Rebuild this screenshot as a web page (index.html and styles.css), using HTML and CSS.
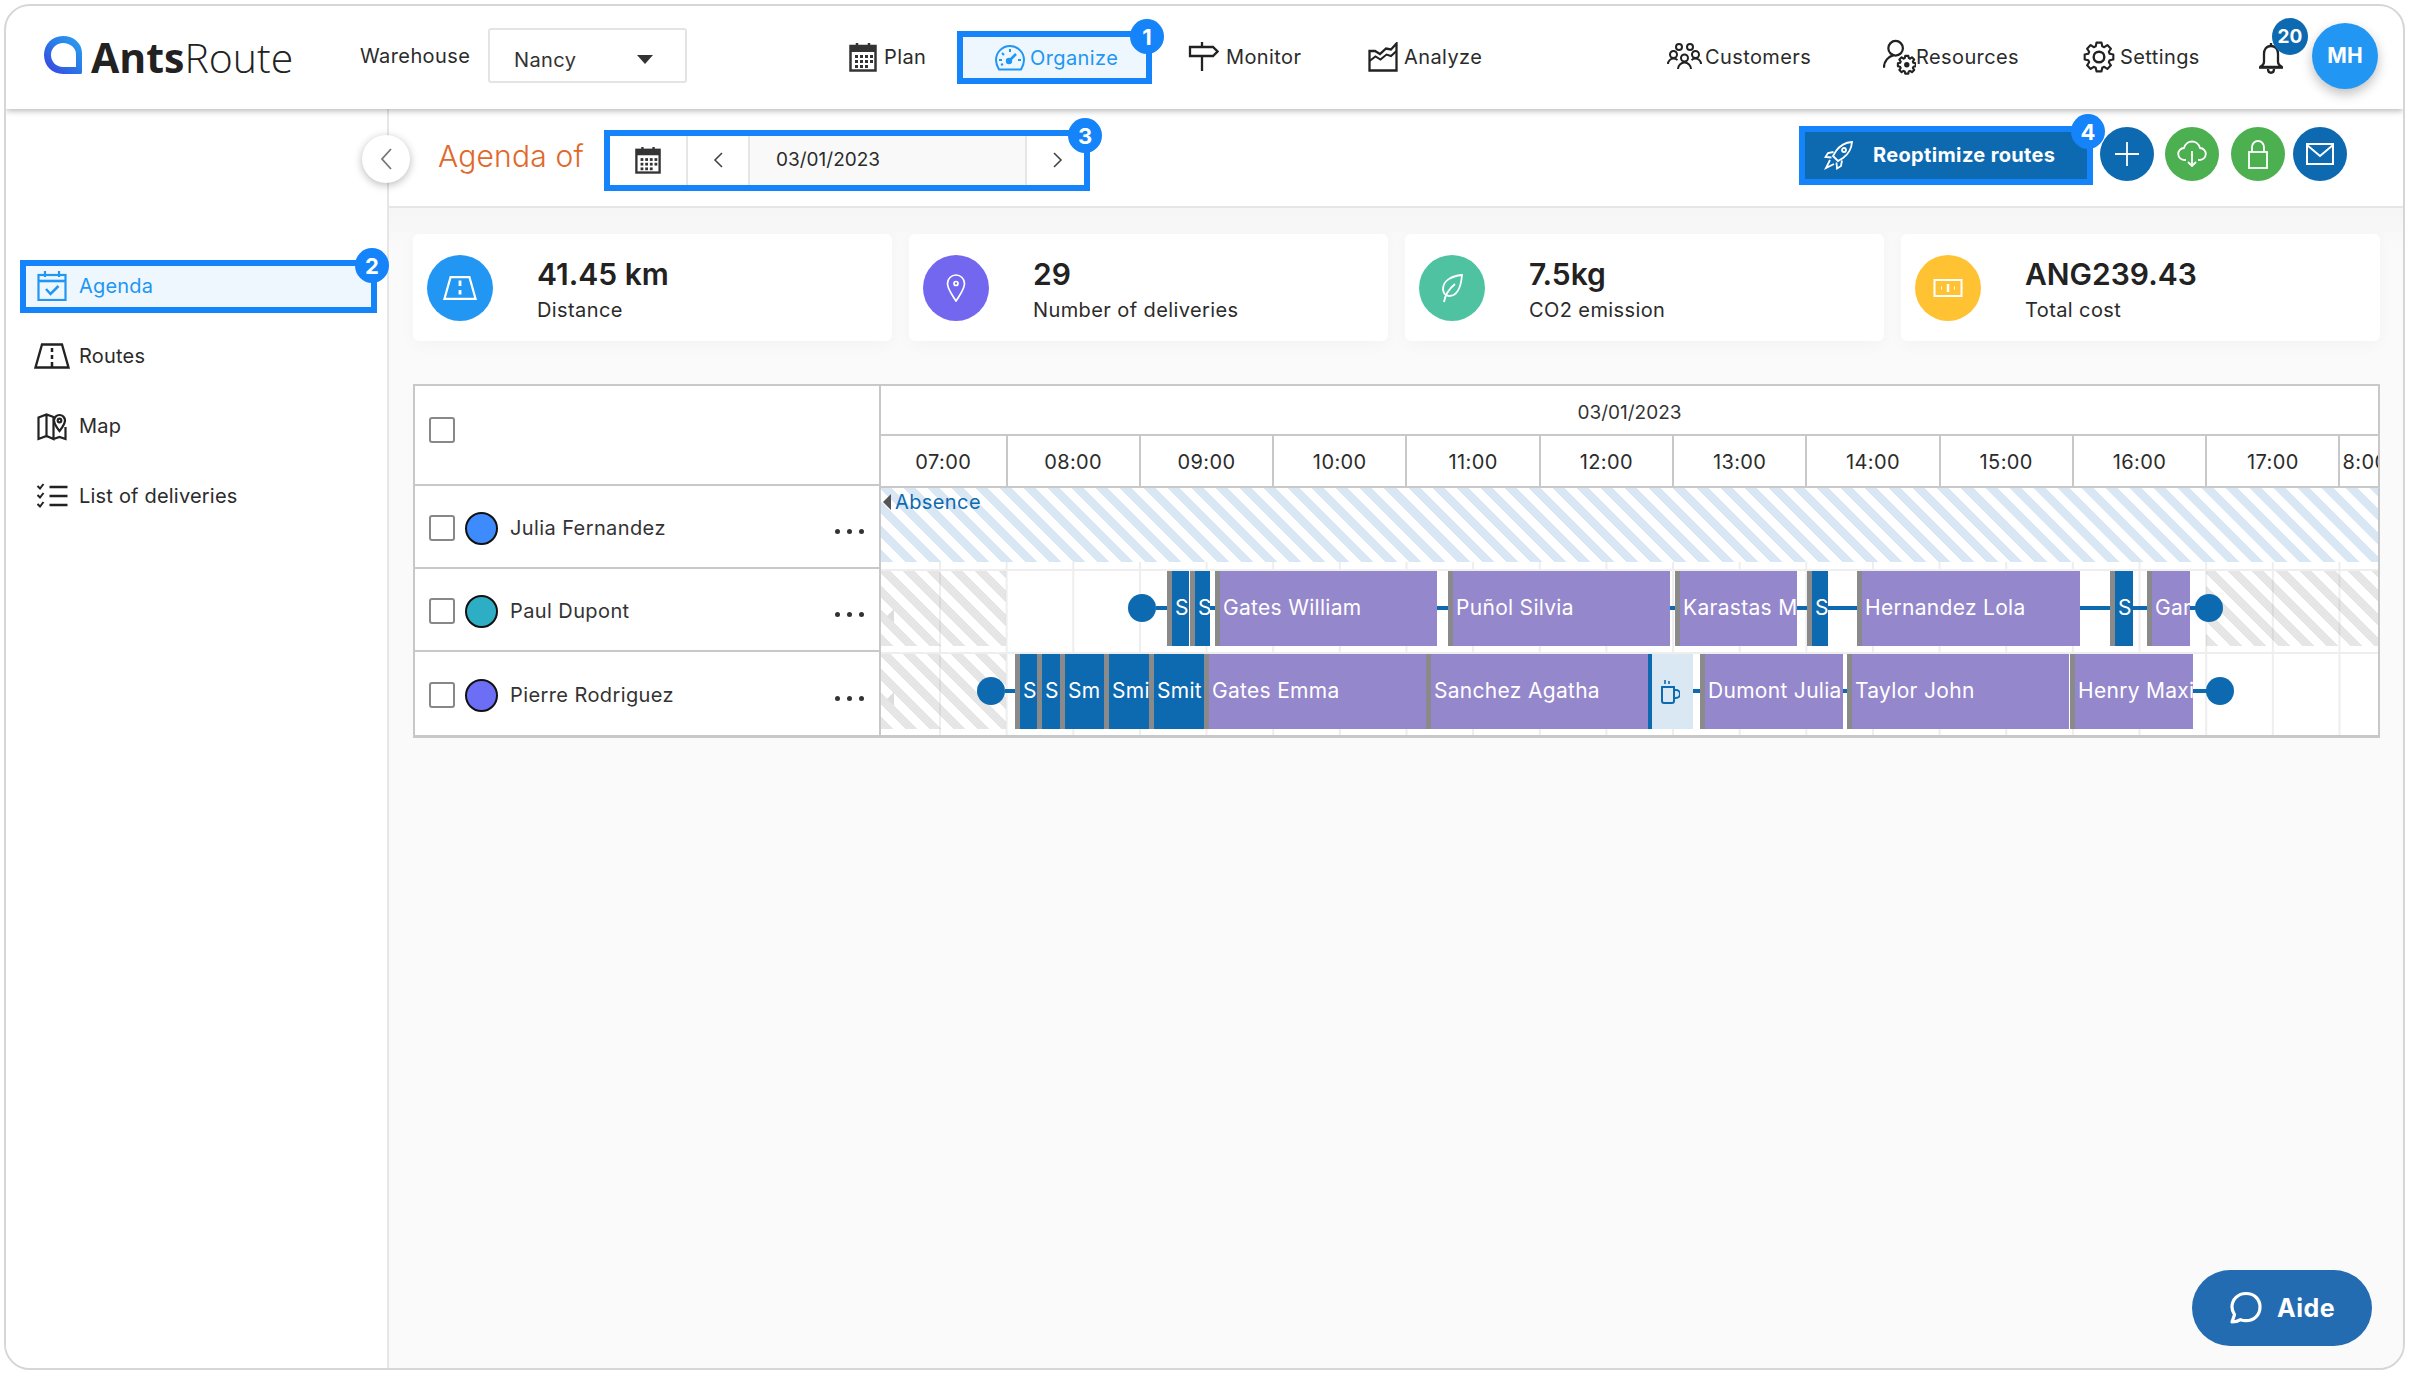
FILE: index.html
```html
<!DOCTYPE html>
<html lang="en">
<head>
    <meta charset="UTF-8">
    <title>AntsRoute - Agenda</title>
    <link rel="stylesheet" href="styles.css">
</head>
<body>
    <div class="frame">
        <header class="topbar">
            <div class="brand">
                <svg class="brand-mark" viewBox="0 0 40 40">
                    <defs>
                        <linearGradient id="mark" x1="0" y1="1" x2="1" y2="0">
                            <stop offset="0" stop-color="#3a3fe0"/>
                            <stop offset="0.55" stop-color="#2a7ce8"/>
                            <stop offset="1" stop-color="#2aa4f0"/>
                        </linearGradient>
                    </defs>
                    <path fill="url(#mark)" fill-rule="evenodd" d="M20 1C9 1 1 9.500 1 20s8 19 19 19h18a2 2 0 0 0 1-2V18C39 8.500 31 1 20 1zM20 8c-6.500 0-12 5-12 12s5.500 12 12 12h13V19c0-6-5.500-11-13-11z"/>
                </svg>
                <span class="brand-name"><b>Ants</b>Route</span>
            </div>
            <label class="warehouse-label">Warehouse</label>
            <div class="select">
                <span>Nancy</span>
                <i class="caret"></i>
            </div>

            <nav class="nav">
                <a class="nav-item nav-plan">
                    <svg class="ico" width="28" height="30" viewBox="0 0 28 30"><rect x="1.500" y="4" width="25" height="24.500" fill="none" stroke="#333" stroke-width="2.500"/><path d="M1 4h26v6H1z" fill="#333"/><path d="M8 1v5M20 1v5" stroke="#333" stroke-width="2.500"/><g fill="#333"><rect x="6" y="13" width="3" height="3"/><rect x="11" y="13" width="3" height="3"/><rect x="16" y="13" width="3" height="3"/><rect x="21" y="13" width="3" height="3"/><rect x="6" y="18" width="3" height="3"/><rect x="11" y="18" width="3" height="3"/><rect x="16" y="18" width="3" height="3"/><rect x="21" y="18" width="3" height="3"/><rect x="6" y="23" width="3" height="3"/><rect x="11" y="23" width="3" height="3"/><rect x="16" y="23" width="3" height="3"/></g></svg>
                    Plan
                </a>
                <a class="nav-item nav-organize">
                    <svg class="ico" width="30" height="26" viewBox="0 0 30 26" fill="none" stroke="#2196f3" stroke-width="2"><path d="M4 24.500C2.200 21.500 1 18.500 1 15 1 7.300 7.300 1 15 1s14 6.300 14 14c0 3.500-1.200 6.500-3 9.500z"/><path d="M14 16l7-7" stroke-width="2.500"/><circle cx="14" cy="16" r="2.200" fill="#2196f3"/><path d="M15 4v3M7 8l2 2M4 15h3M26 15h-3M6 20l2-1" stroke-width="2"/></svg>
                    Organize
                    <span class="step">1</span>
                </a>
                <a class="nav-item nav-monitor">
                    <svg class="ico" width="31" height="29" viewBox="0 0 31 29" fill="none" stroke="#222" stroke-width="2.300"><path d="M2 5h23l4.500 4.500L25 14H2z"/><path d="M14 0v5M14 14v15"/></svg>
                    Monitor
                </a>
                <a class="nav-item nav-analyze">
                    <svg class="ico" width="30" height="30" viewBox="0 0 30 30" fill="none" stroke="#222" stroke-width="2.300"><path d="M1.500 9v19.500h27V1.500l-5.500 6-5-1-6 5.500-5-3z"/><path d="M1.500 19l6-4.500 5 3 6-5 4.500 1.500 5.500-5" stroke-width="2"/></svg>
                    Analyze
                </a>
                <a class="nav-item nav-customers">
                    <svg class="ico" width="35" height="27" viewBox="0 0 35 27" fill="none" stroke="#222" stroke-width="2"><circle cx="12" cy="4" r="3"/><circle cx="23" cy="4" r="3"/><circle cx="6.500" cy="11.500" r="3.500"/><circle cx="28.500" cy="11.500" r="3.500"/><circle cx="17.500" cy="15" r="3.500"/><path d="M1 21c0-3 2.500-5.500 5.500-5.500 1.500 0 3 .6 4 1.600M34 21c0-3-2.500-5.500-5.500-5.500-1.500 0-3 .6-4 1.600M11 26c0-3.500 3-6.500 6.500-6.500S24 22.500 24 26"/></svg>
                    Customers
                </a>
                <a class="nav-item nav-resources">
                    <svg class="ico" width="33" height="36" viewBox="0 0 34 36"><g fill="none" stroke="#222" stroke-width="2.300"><circle cx="13" cy="9" r="7.500"/><path d="M1 29c0-7 4.500-11.500 10-13"/></g><g transform="translate(24.500 26) scale(.62)"><path fill="none" stroke="#222" stroke-width="3.500" stroke-linejoin="round" d="M11-3.360L14.770-2.600 14.770 2.600 11 3.360 10.150 5.400 12.290 8.600 8.600 12.290 5.400 10.150 3.360 11 2.600 14.770-2.600 14.770-3.360 11-5.400 10.150-8.600 12.290-12.290 8.600-10.150 5.400-11 3.360-14.770 2.600-14.770-2.600-11-3.360-10.150-5.400-12.290-8.600-8.600-12.290-5.400-10.150-3.360-11-2.600-14.770 2.600-14.770 3.360-11 5.400-10.150 8.600-12.290 12.290-8.600 10.150-5.400z"/><circle r="4.500" fill="#222"/></g></svg>
                    Resources
                </a>
                <a class="nav-item nav-settings">
                    <svg class="ico" width="32" height="34" viewBox="-16.500 -16.500 33 33"><path fill="none" stroke="#222" stroke-width="2.200" stroke-linejoin="round" d="M11-3.360L14.770-2.600 14.770 2.600 11 3.360 10.150 5.400 12.290 8.600 8.600 12.290 5.400 10.150 3.360 11 2.600 14.770-2.600 14.770-3.360 11-5.400 10.150-8.600 12.290-12.290 8.600-10.150 5.400-11 3.360-14.770 2.600-14.770-2.600-11-3.360-10.150-5.400-12.290-8.600-8.600-12.290-5.400-10.150-3.360-11-2.600-14.770 2.600-14.770 3.360-11 5.400-10.150 8.600-12.290 12.290-8.600 10.150-5.400z"/><circle r="5.500" fill="none" stroke="#222" stroke-width="2.500"/></svg>
                    Settings
                </a>
            </nav>

            <div class="bell">
                <svg width="26" height="32" viewBox="0 0 26 32" fill="none" stroke="#222" stroke-width="2.300"><path d="M13 4c-5 0-7 4-7 8v8c0 2-2 4-4 5h22c-2-1-4-3-4-5v-8c0-4-2-8-7-8z"/><path d="M1 25.500h24" /><path d="M13 1v3"/><path d="M10 27c0 5 6 5 6 0"/></svg>
                <span class="bell-count">20</span>
            </div>
            <div class="avatar">MH</div>
        </header>

        <div class="workspace">
            <aside class="sidebar">
                <button class="collapse">
                    <svg width="12" height="22" viewBox="0 0 12 22" fill="none" stroke="#777" stroke-width="1.800"><path d="M11 1L2 11l9 10"/></svg>
                </button>
                <a class="side-item side-active">
                    <svg class="side-ico" width="30" height="30" viewBox="0 0 30 30" fill="none" stroke="#2196f3" stroke-width="2.200"><rect x="1.500" y="4" width="27" height="25"/><path d="M1.500 10h27" stroke-width="2.600"/><path d="M8 0v6M22 0v6"/><path d="M9 18l4.500 5 8-8" stroke-width="2.500"/></svg>
                    Agenda
                    <span class="step">2</span>
                </a>
                <a class="side-item">
                    <svg class="side-ico" width="36" height="26" viewBox="0 0 36 26" fill="none" stroke="#222" stroke-width="2.300"><path d="M8 1.500h20L34.500 24.500H1.500z"/><path d="M18 5v4M18 12v4M18 19v5" stroke-width="2.500"/></svg>
                    Routes
                </a>
                <a class="side-item">
                    <svg class="side-ico" width="30" height="30" viewBox="0 0 30 30" fill="none" stroke="#222" stroke-width="2.200"><path d="M1.500 6.500l8-3 7 2.500v22l-7-3-8 3zM9.500 3.500v23M16.500 28l6-2 6 2V16"/><path d="M22.500 20c-3-4-5.500-7-5.500-10.500a5.500 5.500 0 0 1 11 0C28 13 25.500 16 22.500 20z" fill="#fff"/><circle cx="22.500" cy="9.500" r="1.800"/></svg>
                    Map
                </a>
                <a class="side-item">
                    <svg class="side-ico" width="31" height="26" viewBox="0 0 31 26" fill="none" stroke="#222" stroke-width="2.500"><path d="M13 4h18M13 13h18M13 22h18"/><path d="M1 3l2.500 2.500L7 1M1 12l2.500 2.500L7 10M1 21l2.500 2.500L7 19" stroke-width="2"/></svg>
                    List of deliveries
                </a>
            </aside>

            <main class="content">
                <div class="toolbar">
                    <h1 class="title">Agenda of</h1>
                    <div class="date-box">
                        <span class="date-cell date-cal">
                            <svg width="26" height="28" viewBox="0 0 28 30"><rect x="1.500" y="4" width="25" height="24.500" fill="none" stroke="#333" stroke-width="2.500"/><path d="M1 4h26v6H1z" fill="#333"/><path d="M8 1v5M20 1v5" stroke="#333" stroke-width="2.500"/><g fill="#333"><rect x="6" y="13" width="3" height="3"/><rect x="11" y="13" width="3" height="3"/><rect x="16" y="13" width="3" height="3"/><rect x="21" y="13" width="3" height="3"/><rect x="6" y="18" width="3" height="3"/><rect x="11" y="18" width="3" height="3"/><rect x="16" y="18" width="3" height="3"/><rect x="21" y="18" width="3" height="3"/><rect x="6" y="23" width="3" height="3"/><rect x="11" y="23" width="3" height="3"/><rect x="16" y="23" width="3" height="3"/></g></svg>
                        </span>
                        <span class="date-cell date-prev">
                            <svg width="10" height="16" viewBox="0 0 10 16" fill="none" stroke="#444" stroke-width="1.600"><path d="M9 1L2 8l7 7"/></svg>
                        </span>
                        <span class="date-cell date-value">03/01/2023</span>
                        <span class="date-cell date-next">
                            <svg width="10" height="16" viewBox="0 0 10 16" fill="none" stroke="#444" stroke-width="1.600"><path d="M1 1l7 7-7 7"/></svg>
                        </span>
                        <span class="step">3</span>
                    </div>

                    <div class="actions">
                        <button class="reoptimize">
                            <svg width="30" height="30" viewBox="0 0 30 30" fill="none" stroke="#fff" stroke-width="1.800"><path d="M28 2c-7 .5-12 3.500-16 9l-3 5 5 5 5-3c5.500-4 8.500-9 9-16z"/><circle cx="20" cy="10" r="2"/><path d="M9.500 12L4 13l-2.500 4 6 .5M18 20.500l-1 5.500-4 2.500-.5-6M6 20l-4 8 8-4"/></svg>
                            Reoptimize routes
                            <span class="step">4</span>
                        </button>
                        <button class="round round-blue">
                            <svg width="26" height="26" viewBox="0 0 26 26" stroke="#fff" stroke-width="1.800"><path d="M13 1v24M1 13h24"/></svg>
                        </button>
                        <button class="round round-green">
                            <svg width="30" height="28" viewBox="0 0 30 28" fill="none" stroke="#fff" stroke-width="1.800"><path d="M9 20H7.500a6 6 0 0 1-.5-12c1-4 4.500-6.500 8-6.500S22 4 23 8a6 6 0 0 1-.5 12H21"/><path d="M15 11v15M11 22l4 4 4-4"/></svg>
                        </button>
                        <button class="round round-green">
                            <svg width="22" height="30" viewBox="0 0 22 30" fill="none" stroke="#fff" stroke-width="1.800"><rect x="2" y="13" width="18" height="16"/><path d="M5 13V8a6 6 0 0 1 12 0v5"/></svg>
                        </button>
                        <button class="round round-blue">
                            <svg width="28" height="22" viewBox="0 0 28 22" fill="none" stroke="#fff" stroke-width="2"><rect x="1" y="1" width="26" height="20"/><path d="M1 2l13 11L27 2"/></svg>
                        </button>
                    </div>
                </div>

                <div class="page">
                    <section class="stats">
                        <div class="stat">
                            <span class="stat-ico stat-blue">
                                <svg width="34" height="28" viewBox="0 0 36 26" fill="none" stroke="#fff" stroke-width="2.300"><path d="M8 1.500h20L34.500 24.500H1.500z"/><path d="M18 5v6M18 15v5" stroke-width="3"/></svg>
                            </span>
                            <div><div class="stat-value">41.45 km</div><div class="stat-label">Distance</div></div>
                        </div>
                        <div class="stat">
                            <span class="stat-ico stat-violet">
                                <svg width="20" height="28" viewBox="0 0 20 28" fill="none" stroke="#fff" stroke-width="1.700"><path d="M10 27C5 19 1.500 15 1.500 9.500a8.500 8.500 0 0 1 17 0C18.500 15 15 19 10 27z"/><circle cx="10" cy="9.500" r="2"/></svg>
                            </span>
                            <div><div class="stat-value">29</div><div class="stat-label">Number of deliveries</div></div>
                        </div>
                        <div class="stat">
                            <span class="stat-ico stat-green">
                                <svg width="26" height="30" viewBox="0 0 26 30" fill="none" stroke="#fff" stroke-width="1.800"><path d="M23 2C12 3 4 8 4 16c0 4 2.500 7 6 7 8 0 12-9 13-21z"/><path d="M16 11C10 16 6 22 5 29"/></svg>
                            </span>
                            <div><div class="stat-value">7.5kg</div><div class="stat-label">CO2 emission</div></div>
                        </div>
                        <div class="stat">
                            <span class="stat-ico stat-yellow">
                                <svg width="30" height="22" viewBox="0 0 30 22" fill="none" stroke="#fff" stroke-width="2"><rect x="1.500" y="3" width="27" height="16"/><path d="M15 7v8" stroke-width="2.500"/><path d="M8 11h1M21 11h1" stroke-width="3"/></svg>
                            </span>
                            <div><div class="stat-value">ANG239.43</div><div class="stat-label">Total cost</div></div>
                        </div>
                    </section>

                    <section class="planning">
                        <div class="drivers">
                            <div class="drivers-head"><span class="check"></span></div>
                            <div class="driver">
                                <span class="check"></span><span class="swatch swatch-a"></span>
                                <span class="driver-name">Julia Fernandez</span><span class="more"><i></i><i></i><i></i></span>
                            </div>
                            <div class="driver">
                                <span class="check"></span><span class="swatch swatch-b"></span>
                                <span class="driver-name">Paul Dupont</span><span class="more"><i></i><i></i><i></i></span>
                            </div>
                            <div class="driver">
                                <span class="check"></span><span class="swatch swatch-c"></span>
                                <span class="driver-name">Pierre Rodriguez</span><span class="more"><i></i><i></i><i></i></span>
                            </div>
                        </div>

                        <div class="timeline">
                            <div class="day">03/01/2023</div>
                            <div class="hours">
                                <span class="hour hour-first">07:00</span>
                                <span class="hour">08:00</span>
                                <span class="hour">09:00</span>
                                <span class="hour">10:00</span>
                                <span class="hour">11:00</span>
                                <span class="hour">12:00</span>
                                <span class="hour">13:00</span>
                                <span class="hour">14:00</span>
                                <span class="hour">15:00</span>
                                <span class="hour">16:00</span>
                                <span class="hour">17:00</span>
                                <span class="hour hour-last">8:00</span>
                            </div>

                            <div class="track">
                                <div class="absence"><i class="absence-arrow"></i>Absence</div>
                            </div>

                            <div class="track">
                                <i class="off" style="left:0;width:125px"><b></b></i>
                                <i class="dot" style="left:247px"></i>
                                <i class="link" style="left:275px;width:12px"></i>
                                <div class="job job-blue" style="left:286px;width:22px">S</div>
                                <div class="job job-blue" style="left:309px;width:20px">S</div>
                                <i class="link" style="left:329px;width:6px"></i>
                                <div class="job" style="left:334px;width:222px">Gates William</div>
                                <i class="link" style="left:556px;width:11px"></i>
                                <div class="job" style="left:567px;width:222px">Puñol Silvia</div>
                                <i class="link" style="left:789px;width:5px"></i>
                                <div class="job" style="left:794px;width:122px">Karastas M</div>
                                <i class="link" style="left:916px;width:10px"></i>
                                <div class="job job-blue" style="left:926px;width:21px">S</div>
                                <i class="link" style="left:947px;width:29px"></i>
                                <div class="job" style="left:976px;width:223px">Hernandez Lola</div>
                                <i class="link" style="left:1199px;width:30px"></i>
                                <div class="job job-blue" style="left:1229px;width:23px">S</div>
                                <i class="link" style="left:1252px;width:14px"></i>
                                <div class="job" style="left:1266px;width:43px">Gar</div>
                                <i class="link" style="left:1309px;width:10px"></i>
                                <i class="dot" style="left:1314px"></i>
                                <i class="off" style="left:1325px;width:172px"></i>
                            </div>

                            <div class="track">
                                <i class="off" style="left:0;width:125px"><b></b></i>
                                <i class="dot" style="left:96px"></i>
                                <i class="link" style="left:124px;width:10px"></i>
                                <div class="job job-blue" style="left:134px;width:22px">S</div>
                                <div class="job job-blue" style="left:156px;width:23px">S</div>
                                <div class="job job-blue" style="left:179px;width:44px">Sm</div>
                                <div class="job job-blue" style="left:223px;width:45px">Smi</div>
                                <div class="job job-blue" style="left:268px;width:55px">Smit</div>
                                <div class="job" style="left:323px;width:222px">Gates Emma</div>
                                <div class="job" style="left:545px;width:222px">Sanchez Agatha</div>
                                <div class="pause" style="left:767px;width:45px">
                                    <svg width="20" height="26" viewBox="0 0 20 26" fill="none" stroke="#0d6ab0" stroke-width="2"><path d="M2 8h12v14a2 2 0 0 1-2 2H4a2 2 0 0 1-2-2z"/><path d="M14 11h2a3 3 0 0 1 0 8h-2"/><path d="M5 1v4M9 2v3" stroke-width="1.600"/></svg>
                                </div>
                                <i class="link" style="left:812px;width:7px"></i>
                                <div class="job" style="left:819px;width:143px">Dumont Julia</div>
                                <i class="link" style="left:962px;width:4px"></i>
                                <div class="job" style="left:966px;width:222px">Taylor John</div>
                                <div class="job" style="left:1189px;width:123px">Henry Maxi</div>
                                <i class="link" style="left:1312px;width:14px"></i>
                                <i class="dot" style="left:1325px"></i>
                            </div>
                        </div>
                    </section>
                </div>
            </main>
        </div>

        <button class="aide">
            <svg width="34" height="34" viewBox="0 0 34 34" fill="none" stroke="#fff" stroke-width="3.200" stroke-linejoin="round"><path d="M17 2.500c-8 0-14 6-14 13.500 0 3 1 5.500 2.500 7.700L3 31c3.500 0 6.500-1 8.500-2.300 1.700.6 3.500 1 5.500 1 8 0 14-5.700 14-13.700S25 2.500 17 2.500z"/></svg>
            Aide
        </button>
    </div>
</body>
</html>
```

FILE: styles.css
```css
* {
    box-sizing: border-box;
}

html, body {
    margin: 0;
    height: 100%;
    background: #fff;
    overflow: hidden;
}

body {
    padding: 4px;
    font-family: Inter, "Noto Sans", sans-serif;
    font-size: 20px;
    color: #2b2b2b;
    letter-spacing: 0.4px;
}

button {
    font: inherit;
    border: none;
    cursor: pointer;
}

.frame {
    position: relative;
    width: 2401px;
    height: 1366px;
    border: 2px solid #d6d6d6;
    border-radius: 26px;
    overflow: hidden;
    display: flex;
    flex-direction: column;
    background: #fafafa;
}

/* Top bar */
.topbar {
    position: relative;
    z-index: 3;
    flex: 0 0 103px;
    display: flex;
    align-items: center;
    background: #fff;
    box-shadow: 0 2px 6px rgba(0, 0, 0, 0.28);
    padding-left: 37px;
}

.brand {
    display: flex;
    align-items: center;
    gap: 8px;
    width: 251px;
}

.brand-mark {
    flex: none;
    width: 40px;
    height: 40px;
    margin-top: -6px;
}

.brand-name {
    font-family: "Open Sans", sans-serif;
    font-size: 41px;
    font-weight: 300;
    letter-spacing: 0;
    color: #222;
    line-height: 1;
}

.brand-name b {
    font-weight: 700;
}

.warehouse-label {
    margin-left: 66px;
    width: 128px;
    margin-top: -3px;
}

.select {
    width: 199px;
    height: 55px;
    margin-top: -4px;
    border: 2px solid #e4e4e4;
    border-radius: 3px;
    padding: 8px 32px 0 24px;
    display: flex;
    align-items: center;
    justify-content: space-between;
    color: #333;
}

.caret {
    width: 0;
    height: 0;
    border-left: 8px solid transparent;
    border-right: 8px solid transparent;
    border-top: 9px solid #333;
}

.nav {
    display: flex;
    align-items: center;
    margin-left: 162px;
    margin-top: -2px;
}

.nav-item {
    position: relative;
    display: flex;
    align-items: center;
    gap: 7px;
    height: 53px;
    white-space: nowrap;
}

.ico {
    flex: none;
}

.nav-plan { width: 108px; }
.nav-monitor { width: 180px; margin-left: 36px; }
.nav-analyze { width: 299px; gap: 6px; }
.nav-customers { width: 216px; gap: 3px; }
.nav-resources { width: 200px; gap: 0; }
.nav-settings { width: 175px; gap: 5px; }

.nav-organize {
    width: 195px;
    padding-left: 32px;
    gap: 5px;
    margin-top: 2px;
    border: 6px solid #1583f9;
    background: #eef7fe;
    color: #2196f3;
}

.step {
    position: absolute;
    top: -18px;
    right: -18px;
    width: 34px;
    height: 35px;
    border-radius: 50%;
    background: #1583f9;
    color: #fff;
    font-size: 22px;
    font-weight: 700;
    letter-spacing: 0;
    display: flex;
    align-items: center;
    justify-content: center;
}

.bell {
    position: relative;
    width: 26px;
    height: 32px;
}

.bell-count {
    position: absolute;
    left: 14px;
    top: -24px;
    width: 36px;
    height: 37px;
    border-radius: 50%;
    background: #0d6ab0;
    color: #fff;
    font-size: 19px;
    font-weight: 700;
    letter-spacing: 0;
    display: flex;
    align-items: center;
    justify-content: center;
}

.avatar {
    width: 66px;
    height: 66px;
    margin-left: 28px;
    margin-top: -4px;
    border-radius: 50%;
    background: #2196f3;
    box-shadow: 0 5px 12px rgba(0, 0, 0, 0.25);
    color: #fff;
    font-size: 21px;
    font-weight: 700;
    letter-spacing: 0;
    display: flex;
    align-items: center;
    justify-content: center;
    position: relative;
    z-index: 1;
}

/* Left menu */
.workspace {
    flex: 1;
    display: flex;
    min-height: 0;
}

.sidebar {
    position: relative;
    z-index: 2;
    flex: 0 0 383px;
    background: #fff;
    border-right: 2px solid #e6e6e6;
    padding: 151px 0 0 14px;
}

.collapse {
    position: absolute;
    top: 26px;
    right: -23px;
    width: 48px;
    height: 48px;
    padding: 0;
    border-radius: 50%;
    background: #fff;
    box-shadow: 0 2px 8px rgba(0, 0, 0, 0.28);
    display: flex;
    align-items: center;
    justify-content: center;
}

.side-item {
    position: relative;
    display: flex;
    align-items: center;
    width: 357px;
    height: 53px;
    margin-bottom: 17px;
    padding-left: 14px;
    padding-bottom: 2px;
    gap: 9px;
    white-space: nowrap;
    letter-spacing: 0.2px;
}

.side-ico {
    flex: none;
    width: 36px;
}

.side-active {
    border: 6px solid #1583f9;
    background: #eef7fe;
    color: #2196f3;
    padding-left: 8px;
}

/* Toolbar */
.content {
    flex: 1;
    min-width: 0;
    display: flex;
    flex-direction: column;
}

.toolbar {
    flex: 0 0 99px;
    display: flex;
    align-items: flex-start;
    background: #fff;
    border-bottom: 2px solid #e6e6e6;
    padding: 0 56px 0 49px;
}

.title {
    margin: 25px 0 0;
    width: 166px;
    font-size: 30px;
    font-weight: 300;
    line-height: 44px;
    letter-spacing: 0.2px;
    color: #e0682a;
    white-space: nowrap;
}

.date-box {
    position: relative;
    display: flex;
    width: 486px;
    height: 61px;
    margin-top: 21px;
    border: 6px solid #1583f9;
}

.date-cell {
    display: flex;
    align-items: center;
    justify-content: center;
    border-right: 2px solid #e6e6e6;
    padding-bottom: 2px;
}

.date-cal { width: 78px; }
.date-prev { width: 62px; }
.date-next { flex: 1; border-right: none; padding-left: 5px; }

.date-value {
    width: 277px;
    justify-content: flex-start;
    padding: 0 0 3px 26px;
    background: #f9f9f9;
    font-size: 19px;
    letter-spacing: 0;
}

.actions {
    margin-left: auto;
    display: flex;
    align-items: flex-start;
}

.reoptimize {
    position: relative;
    width: 294px;
    height: 59px;
    margin-top: 17px;
    margin-right: 7px;
    padding: 0 0 2px 19px;
    border: 6px solid #1583f9;
    background: #0d6ab0;
    color: #fff;
    font-weight: 700;
    letter-spacing: 0.35px;
    display: flex;
    align-items: center;
    gap: 19px;
    white-space: nowrap;
}

.round {
    width: 54px;
    height: 54px;
    margin-top: 18px;
    margin-left: 12px;
    padding: 0;
    border-radius: 50%;
    display: flex;
    align-items: center;
    justify-content: center;
}

.reoptimize + .round {
    margin-left: 0;
}

.reoptimize + .round + .round {
    margin-left: 11px;
}

.round:last-child {
    margin-left: 8px;
}

.round-blue { background: #0d6ab0; }
.round-green { background: #4caf50; }

/* Stat cards */
.page {
    flex: 1;
    padding: 26px 23px 0 24px;
    background: linear-gradient(#f5f5f6, #fafafa 40px);
}

.stats {
    display: grid;
    grid-template-columns: repeat(4, 1fr);
    gap: 17px;
}

.stat {
    height: 107px;
    display: flex;
    align-items: center;
    gap: 44px;
    padding-left: 14px;
    background: #fff;
    border-radius: 6px;
    box-shadow: 0 4px 16px rgba(0, 0, 0, 0.03);
}

.stat-ico {
    width: 66px;
    height: 66px;
    border-radius: 50%;
    display: flex;
    align-items: center;
    justify-content: center;
}

.stat-blue { background: #2196f3; }
.stat-violet { background: #7367f0; }
.stat-green { background: #4fc3a1; }
.stat-yellow { background: #ffc233; }

.stat-value {
    padding-top: 3px;
    font-size: 30px;
    font-weight: 600;
    letter-spacing: 0;
    color: #222;
    line-height: 36px;
}

.stat-label {
    margin-top: 5px;
    line-height: 26px;
}

/* Planning table */
.planning {
    display: flex;
    margin-top: 43px;
    height: 354px;
    background: #fff;
    border: 2px solid #c8c8c8;
    border-bottom-width: 3px;
}

.drivers {
    flex: 0 0 466px;
    border-right: 2px solid #c8c8c8;
}

.drivers-head {
    height: 100px;
    display: flex;
    align-items: center;
    padding: 0 0 10px 14px;
    border-bottom: 2px solid #c8c8c8;
}

.driver {
    height: 83px;
    display: flex;
    align-items: center;
    padding: 3px 0 0 14px;
    border-bottom: 2px solid #c8c8c8;
}

.driver:last-child {
    border-bottom: none;
}

.check {
    flex: none;
    width: 26px;
    height: 26px;
    border: 2px solid #888;
    border-radius: 3px;
    background: #fff;
}

.swatch {
    flex: none;
    width: 33px;
    height: 33px;
    margin-left: 10px;
    border: 2px solid #111;
    border-radius: 50%;
}

.swatch-a { background: #3d8bfd; }
.swatch-b { background: #2eaec5; }
.swatch-c { background: #6c6ef5; }

.driver-name {
    flex: 1;
    margin-left: 12px;
    color: #333;
}

.more {
    display: flex;
    gap: 7px;
    margin: 7px 15px 0 0;
}

.more i {
    width: 5px;
    height: 5px;
    border-radius: 50%;
    background: #333;
}

.timeline {
    flex: 1;
    min-width: 0;
    overflow: hidden;
}

.day {
    height: 50px;
    display: flex;
    align-items: center;
    justify-content: center;
    padding-top: 4px;
    color: #333;
    font-size: 19px;
    letter-spacing: 0;
    border-bottom: 2px solid #c8c8c8;
}

.hours {
    display: flex;
    height: 52px;
    padding: 0;
    border-bottom: 2px solid #c8c8c8;
}

.hour {
    flex: 0 0 133.3px;
    display: flex;
    align-items: center;
    justify-content: center;
    padding-top: 2px;
    border-right: 2px solid #c8c8c8;
    overflow: hidden;
    white-space: nowrap;
}

.hour-first { flex-basis: 126.5px; }

.hour-last {
    flex: 1 1 0;
    min-width: 0;
    border-right: none;
    justify-content: flex-start;
    padding-left: 2px;
}

.track {
    position: relative;
    height: 83px;
    border-bottom: 2px solid #eee;
    background: linear-gradient(90deg, #eee 2px, transparent 2px) 58px 0 / 66.65px 100% repeat-x;
}

.track:last-child {
    border-bottom: none;
}

.absence {
    height: 74px;
    padding: 0 0 0 14px;
    background: repeating-linear-gradient(45deg, #d8e7f3 0 8.500px, #fff 8.500px 17px);
    color: #0d6ab0;
    line-height: 28px;
    position: relative;
}

.absence-arrow {
    position: absolute;
    left: 2px;
    top: 6px;
    border-top: 8px solid transparent;
    border-bottom: 8px solid transparent;
    border-right: 8px solid #555;
}

.off {
    position: absolute;
    top: 0;
    height: 75px;
    background: repeating-linear-gradient(45deg, rgba(150, 150, 150, 0.24) 0 8.500px, transparent 8.500px 17px);
}

.off b {
    position: absolute;
    left: 6px;
    top: 38px;
    border-top: 7px solid transparent;
    border-bottom: 7px solid transparent;
    border-right: 7px solid #ddd;
}

.dot {
    position: absolute;
    top: 23px;
    z-index: 2;
    width: 28px;
    height: 28px;
    border-radius: 50%;
    background: #0d6ab0;
}

.link {
    position: absolute;
    top: 35px;
    height: 4px;
    background: #0d6ab0;
}

.job {
    position: absolute;
    top: 0;
    height: 75px;
    display: flex;
    align-items: center;
    padding: 0 0 2px 3px;
    border-left: 5px solid #8a8a8a;
    background: #9587cb;
    color: #fff;
    white-space: nowrap;
    overflow: hidden;
    font-size: 21px;
    letter-spacing: 0.3px;
}

.job-blue {
    background: #0d6ab0;
}

.pause {
    position: absolute;
    top: 0;
    height: 75px;
    display: flex;
    align-items: center;
    padding-left: 8px;
    border-left: 4px solid #0d6ab0;
    background: #d9e8f3;
}

.aide {
    position: absolute;
    right: 31px;
    bottom: 22px;
    z-index: 4;
    width: 180px;
    height: 76px;
    border-radius: 38px;
    background: #246cb2;
    color: #fff;
    font-size: 25px;
    font-weight: 700;
    letter-spacing: 0.5px;
    display: flex;
    align-items: center;
    justify-content: center;
    gap: 14px;
}
```
